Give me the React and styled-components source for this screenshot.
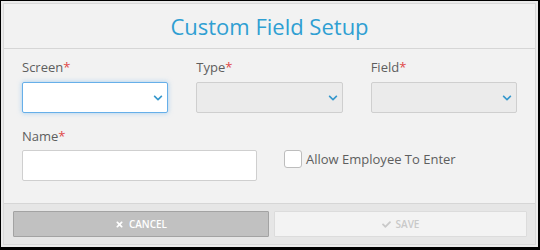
import styled, { createGlobalStyle } from "styled-components";
import { FaChevronDown, FaTimes, FaCheck } from "react-icons/fa";

const GlobalStyle = createGlobalStyle`
  html, body {
    margin: 0;
    padding: 0;
    background: #000;
  }
  body {
    font-family: "Open Sans", "Liberation Sans", sans-serif;
  }
  * { box-sizing: border-box; }
`;

const Frame = styled.div`
  margin: 1px 2px 0 1px;
  width: 537px;
  height: 246px;
  background: #ebebeb;
  padding: 2px;
`;

const Modal = styled.div`
  height: 100%;
  border: 1px solid #d9d9d9;
  background: #f2f2f2;
  display: flex;
  flex-direction: column;
`;

const Header = styled.div`
  height: 45px;
  border-bottom: 1px solid #d6d6d6;
  display: flex;
  align-items: center;
  justify-content: center;
`;

const Title = styled.h1`
  margin: 0;
  font-size: 22px;
  font-weight: 400;
  color: #2f9fd2;
`;

const Body = styled.div`
  flex: 1;
  padding: 9px 18px 0 18px;
`;

const SelectRow = styled.div`
  display: grid;
  grid-template-columns: repeat(3, 1fr);
  column-gap: 28px;
`;

const NameRow = styled.div`
  display: flex;
  gap: 27px;
  margin-top: 14px;
`;

const Field = styled.div`
  display: flex;
  flex-direction: column;
  width: ${(p) => p.$width || "auto"};
`;

const Label = styled.div`
  font-size: 13px;
  line-height: 18px;
  color: #5e5e5e;
  margin-bottom: ${(p) => p.$gap || 6}px;
`;

const Required = styled.span`
  color: #e04848;
`;

const SelectBox = styled.div`
  height: 31px;
  border: 1px solid ${(p) => (p.$focused ? "#66afe9" : "#cfcfcf")};
  background: ${(p) => (p.$focused ? "#fff" : "#ebebeb")};
  box-shadow: ${(p) =>
    p.$focused ? "0 0 5px rgba(102, 175, 233, 0.55)" : "none"};
  border-radius: 2px;
  display: flex;
  align-items: center;
  justify-content: flex-end;
  padding-right: 4px;
  color: #3597cc;
  font-size: 10px;
`;

const TextInput = styled.div`
  height: 31px;
  border: 1px solid #cfcfcf;
  background: #fff;
  border-radius: 2px;
`;

const CheckLabel = styled.label`
  display: flex;
  align-items: center;
  gap: 4px;
  margin-top: 23px;
  align-self: flex-start;
  font-size: 13px;
  color: #5e5e5e;
`;

const Box = styled.span`
  width: 18px;
  height: 18px;
  border: 1px solid #bdbdbd;
  border-radius: 3px;
  background: #fff;
`;

const Footer = styled.div`
  height: 41px;
  border-top: 1px solid #d6d6d6;
  background: #e6e6e6;
  display: flex;
  gap: 5px;
  padding: 7px 0 6px 9px;
`;

const Button = styled.button`
  width: ${(p) => (p.$primary ? 256 : 253)}px;
  height: 26px;
  border: 1px solid ${(p) => (p.$primary ? "#a3a3a3" : "#dcdcdc")};
  background: ${(p) => (p.$primary ? "#c1c1c1" : "#f3f3f3")};
  color: ${(p) => (p.$primary ? "#fff" : "#c9c9c9")};
  font-family: "Open Sans", "Liberation Sans", sans-serif;
  font-size: 10px;
  font-weight: 600;
  display: flex;
  align-items: center;
  justify-content: center;
  gap: 5px;
  padding: 0;
  border-radius: 1px;
`;

export default function App() {
  return (
    <>
      <GlobalStyle />
      <Frame>
        <Modal>
          <Header>
            <Title>Custom Field Setup</Title>
          </Header>
          <Body>
            <SelectRow>
              <Field>
                <Label>
                  Screen<Required>*</Required>
                </Label>
                <SelectBox $focused>
                  <FaChevronDown />
                </SelectBox>
              </Field>
              <Field>
                <Label>
                  Type<Required>*</Required>
                </Label>
                <SelectBox>
                  <FaChevronDown />
                </SelectBox>
              </Field>
              <Field>
                <Label>
                  Field<Required>*</Required>
                </Label>
                <SelectBox>
                  <FaChevronDown />
                </SelectBox>
              </Field>
            </SelectRow>
            <NameRow>
              <Field $width="235px">
                <Label $gap={5}>
                  Name<Required>*</Required>
                </Label>
                <TextInput />
              </Field>
              <CheckLabel>
                <Box />
                Allow Employee To Enter
              </CheckLabel>
            </NameRow>
          </Body>
          <Footer>
            <Button $primary>
              <FaTimes size={9} />
              CANCEL
            </Button>
            <Button>
              <FaCheck size={9} />
              SAVE
            </Button>
          </Footer>
        </Modal>
      </Frame>
    </>
  );
}
